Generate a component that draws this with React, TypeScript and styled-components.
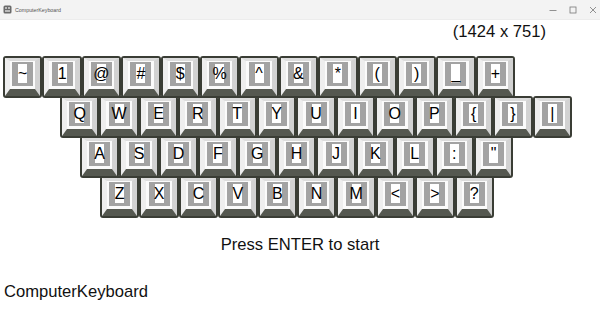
import React from "react";
import styled, { createGlobalStyle } from "styled-components";

const Global = createGlobalStyle`
  html, body { margin: 0; padding: 0; background: #ffffff; }
  body { font-family: "Liberation Sans", Arial, sans-serif; width: 600px; height: 336px; overflow: hidden; }
`;

const Window = styled.div`
  width: 600px;
  height: 336px;
  display: flex;
  flex-direction: column;
  background: #ffffff;
`;

const TitleBar = styled.div`
  height: 20px;
  flex-shrink: 0;
  background: #f3f3f3;
  border-bottom: 1px solid #ececec;
  box-sizing: border-box;
  display: flex;
  align-items: center;
  padding-left: 3px;
  >span{
    font-size: 5.3px;
    color: #555;
    margin-left: 3px;
  }
`;

const Controls = styled.div`
  margin-left: auto;
  display: flex;
  align-items: center;
  gap: 12px;
  padding-right: 3px;
  >svg{ display: block; }
`;

const SizeText = styled.div`
  font-size: 16.6px;
  color: #111;
  align-self: flex-end;
  margin-right: 54px;
  margin-top: 2px;
  line-height: 20px;
`;

const Board = styled.div`
  margin-top: 14px;
  display: flex;
  flex-direction: column;
`;

const Row = styled.div<{ $indent: number }>`
  display: flex;
  padding-left: ${p => p.$indent}px;
  & + &{ margin-top: -2px; }
`;

const Key = styled.div`
  width: 39.4px;
  height: 42px;
  box-sizing: border-box;
  border: 2px solid #3a3d35;
  border-radius: 3px;
  background: #3a3d35;
  flex-shrink: 0;
`;

const Bevel = styled.div`
  height: 100%;
  box-sizing: border-box;
  border-top: 3px solid #dcdcdc;
  border-left: 5px solid #eeeeee;
  border-right: 5px solid #d2d2d2;
  border-bottom: 7px solid #555850;
  background: #fbfbfb;
  padding: 1px 1px 0;
  display: flex;
  justify-content: center;
`;

const Cap = styled.div`
  width: 21px;
  height: 24px;
  background: #a3a3a3;
  display: flex;
  justify-content: center;
  padding-top: 2px;
  box-sizing: border-box;
`;

const Slot = styled.div`
  width: 9px;
  height: 19px;
  background: #ffffff;
  display: flex;
  justify-content: center;
  align-items: center;
  font-size: 16px;
  color: #000;
  line-height: 1;
  white-space: nowrap;
`;

const Prompt = styled.div`
  margin-top: 17px;
  text-align: center;
  font-size: 16.6px;
  color: #111;
  line-height: 20px;
`;

const Footer = styled.div`
  margin-top: 27px;
  margin-left: 4px;
  font-size: 16.6px;
  color: #111;
  line-height: 20px;
`;

const rows: { indent: number; keys: string[] }[] = [
    { indent: 3, keys: ["~", "1", "@", "#", "$", "%", "^", "&", "*", "(", ")", "_", "+"] },
    { indent: 60, keys: ["Q", "W", "E", "R", "T", "Y", "U", "I", "O", "P", "{", "}", "|"] },
    { indent: 80, keys: ["A", "S", "D", "F", "G", "H", "J", "K", "L", ":", "\""] },
    { indent: 100, keys: ["Z", "X", "C", "V", "B", "N", "M", "<", ">", "?"] },
];

function App() {
    return (
        <Window>
            <Global/>
            <TitleBar>
                <svg width="9" height="9" viewBox="0 0 9 9">
                    <rect x="0.5" y="0.5" width="8" height="8" rx="1.5" fill="#6a6a6a"/>
                    <rect x="2" y="2" width="2" height="2" fill="#bbb"/>
                    <rect x="5" y="2" width="2" height="2" fill="#bbb"/>
                    <rect x="2" y="5" width="5" height="2" fill="#bbb"/>
                </svg>
                <span>ComputerKeyboard</span>
                <Controls>
                    <svg width="8" height="8" viewBox="0 0 8 8">
                        <line x1="0.5" y1="4.5" x2="7.5" y2="4.5" stroke="#777" strokeWidth="0.8"/>
                    </svg>
                    <svg width="8" height="8" viewBox="0 0 8 8">
                        <rect x="1" y="1" width="6" height="6" fill="none" stroke="#777" strokeWidth="0.8"/>
                    </svg>
                    <svg width="8" height="8" viewBox="0 0 8 8">
                        <path d="M1 1 L7 7 M7 1 L1 7" stroke="#777" strokeWidth="0.8"/>
                    </svg>
                </Controls>
            </TitleBar>
            <SizeText>(1424 x 751)</SizeText>
            <Board>
                {rows.map((row, i) => (
                    <Row key={i} $indent={row.indent}>
                        {row.keys.map(k => (
                            <Key key={k}>
                                <Bevel>
                                    <Cap>
                                        <Slot>{k}</Slot>
                                    </Cap>
                                </Bevel>
                            </Key>
                        ))}
                    </Row>
                ))}
            </Board>
            <Prompt>Press ENTER to start</Prompt>
            <Footer>ComputerKeyboard</Footer>
        </Window>
    );
}

export default App;
